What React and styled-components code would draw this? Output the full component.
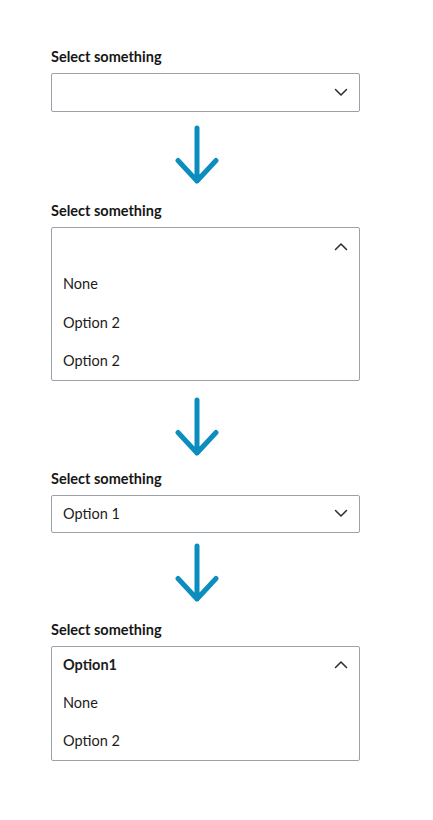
import React from "react";
import styled, { createGlobalStyle } from "styled-components";

const GlobalStyle = createGlobalStyle`
  body {
    margin: 0;
    background: #ffffff;
    font-family: "Lato", "Noto Sans", sans-serif;
    color: #1c1c1c;
  }
`;

// page column
const Page = styled.div`
  width: 309px;
  padding: 47px 0 0 51px;
`;

const Field = styled.div`
  display: flex;
  flex-direction: column;
`;

const Label = styled.div`
  font-size: 14.5px;
  font-weight: 700;
  line-height: 20px;
  color: #161616;
  margin-bottom: 6px;
`;

const Box = styled.div`
  border: 1px solid #9aa1a8;
  border-radius: 2px;
  background: #fff;
`;

const Row = styled.div`
  display: flex;
  align-items: center;
  justify-content: space-between;
  height: ${(p) => (p.$tall ? "38.5px" : "36.5px")};
  padding: 0 11px;
  font-size: 14.5px;
  font-weight: ${(p) => (p.$bold ? 700 : 400)};
  color: #1c1c1c;
`;

const ArrowWrap = styled.div`
  display: flex;
  padding: ${(p) => p.$pad || "15px 0 17px"};
  padding-left: 124px;
`;

const Chevron = ({ up }) => (
  <svg width="14" height="9" viewBox="0 0 14 9" fill="none">
    <path
      d={up ? "M1.5 7.5 L7 2 L12.5 7.5" : "M1.5 1.5 L7 7 L12.5 1.5"}
      stroke="#2b2b2b"
      strokeWidth="1.5"
      strokeLinecap="round"
      strokeLinejoin="round"
    />
  </svg>
);

const DownArrow = () => (
  <svg width="44" height="60" viewBox="0 0 44 60" fill="none">
    <path
      d="M22 3 V56 M3 35.5 L22 56 L41 35.5"
      stroke="#0b8dbd"
      strokeWidth="5"
      strokeLinecap="round"
      strokeLinejoin="round"
    />
  </svg>
);

const Select = ({ value, open, bold, options = [] }) => (
  <Field>
    <Label>Select something</Label>
    <Box>
      <Row $bold={bold}>
        <span>{value}</span>
        <Chevron up={open} />
      </Row>
      {open &&
        options.map((opt, i) => (
          <Row key={i} $tall>
            <span>{opt}</span>
          </Row>
        ))}
    </Box>
  </Field>
);

const App = () => {
  return (
    <Page>
      <GlobalStyle />
      <Select value="" />
      <ArrowWrap $pad="13px 0 16.5px">
        <DownArrow />
      </ArrowWrap>
      <Select value="" open options={["None", "Option 2", "Option 2"]} />
      <ArrowWrap $pad="16px 0 11.5px">
        <DownArrow />
      </ArrowWrap>
      <Select value="Option 1" />
      <ArrowWrap $pad="10px 0 16.5px">
        <DownArrow />
      </ArrowWrap>
      <Select value="Option1" bold open options={["None", "Option 2"]} />
    </Page>
  );
};

export default App;
